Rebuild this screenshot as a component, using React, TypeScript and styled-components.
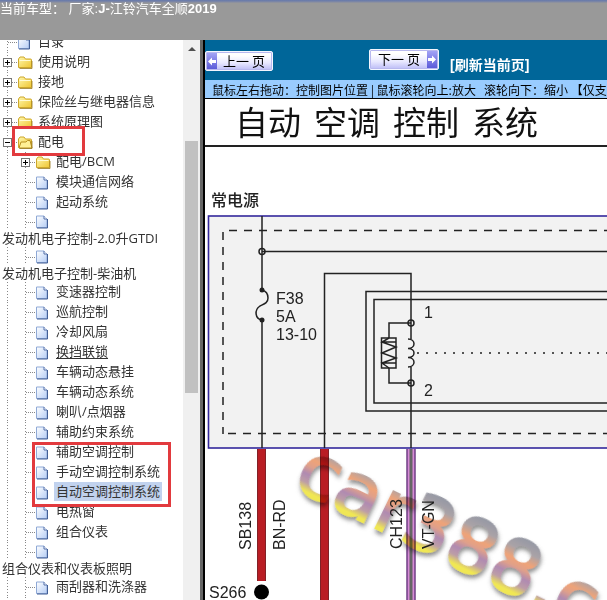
import React from "react";
import styled, { createGlobalStyle, css } from "styled-components";

const GlobalStyle = createGlobalStyle`
  *, *::before, *::after { box-sizing: border-box; }
  body { margin: 0; background: #fff; }
`;

const cjk = `"Noto Sans CJK SC", sans-serif`;

const Page = styled.div`
  display: flex;
  flex-direction: column;
  height: 100vh;
  overflow: hidden;
  font-family: "Liberation Sans", ${cjk};
`;

const Header = styled.header`
  flex: none;
  height: 40px;
  background: linear-gradient(#6478ac 0, #8189a4 2px, #999 3px);
  color: #fff;
  font-size: 13px;
  line-height: 18px;
  white-space: pre;
`;

const Vehicle = styled.strong`
  font-weight: 700;
`;

const Chinese = styled.span`
  font-weight: 400;
`;

const Body = styled.div`
  flex: 1;
  min-height: 0;
  display: grid;
  grid-template-columns: 183px 17px minmax(0, 1fr);
`;

const Tree = styled.nav`
  display: flex;
  flex-direction: column;
  overflow: hidden;
  font-family: "Open Sans", ${cjk};
  font-size: 13px;
  color: #333;
`;

const TreeList = styled.div`
  display: flex;
  flex-direction: column;
  flex: 1 0 auto;
  margin-top: -8px;
`;

const Row = styled.div`
  position: relative;
  flex: none;
  display: flex;
  height: 20px;
`;

const Filler = styled.div`
  display: flex;
  flex: 1;
`;

const Guide = styled.span<{ $branch?: boolean }>`
  flex: none;
  display: flex;
  align-items: center;
  width: 18px;
  padding-left: 3px;
  background-image: repeating-linear-gradient(to bottom, #888 0 1px, transparent 1px 3px)
    ${(p) => p.$branch && css`, repeating-linear-gradient(to right, #888 0 1px, transparent 1px 2px)`};
  background-position: 7px 0, 8px 10px;
  background-size: 1px 100%, 9px 1px;
  background-repeat: no-repeat;
`;

const Toggle = styled.button`
  width: 9px;
  height: 9px;
  margin-top: 1px;
  padding: 0;
  border: 0;
  background: #fff;
  line-height: 0;
`;

const IconCell = styled.span`
  flex: none;
  display: flex;
  align-items: center;
  width: 16px;
  margin-right: 2px;
  padding-top: 1px;
`;

const Label = styled.a<{ $selected?: boolean; $underline?: boolean }>`
  height: 19px;
  padding: 0 2px;
  line-height: 18px;
  white-space: nowrap;
  color: inherit;
  text-decoration: ${(p) => (p.$underline ? "underline" : "none")};
  text-underline-offset: 2px;
  background: ${(p) => (p.$selected ? "#c1d2ee" : "transparent")};
`;

const WrappedItem = styled.div`
  flex: none;
  display: flex;
  flex-direction: column;
`;

const WrappedHead = styled.div`
  display: flex;
  height: 18px;
`;

const WrappedLabel = styled(Label)`
  height: 17px;
  line-height: 17px;
`;

const mark = css`
  content: "";
  position: absolute;
  z-index: 1;
  border: 3px solid #e23a3e;
  pointer-events: none;
`;

const MarkedRow = styled(Row)`
  &::after {
    ${mark}
    left: 12px;
    top: -6px;
    width: 73px;
    height: 30px;
  }
`;

const MarkedGroup = styled.div`
  position: relative;
  flex: none;
  &::after {
    ${mark}
    left: 32px;
    top: 0;
    width: 139px;
    height: 65px;
  }
`;

const ScrollTrack = styled.div`
  display: flex;
  flex-direction: column;
  align-items: center;
  padding-top: 6px;
  background: #f0f0f0;
`;

const Thumb = styled.div`
  width: 13px;
  height: 252px;
  margin-top: 89px;
  background: #c1c1c1;
`;

const Divider = styled.div`
  min-width: 0;
  display: grid;
  border-left: 3px solid #666;
`;

const Main = styled.main`
  display: flex;
  flex-direction: column;
  overflow: hidden;
  border-left: 2px solid #000;
`;

const Toolbar = styled.div`
  flex: none;
  display: flex;
  height: 40px;
  padding-top: 9px;
  background: #069;
`;

const PageButton = styled.button<{ $next?: boolean }>`
  display: flex;
  flex-direction: ${(p) => (p.$next ? "row-reverse" : "row")};
  align-items: stretch;
  width: ${(p) => (p.$next ? 70 : 68)}px;
  height: ${(p) => (p.$next ? 21 : 20)}px;
  margin-top: ${(p) => (p.$next ? 0 : 2)}px;
  margin-left: ${(p) => (p.$next ? 96 : 0)}px;
  padding: 1px;
  border: 1px solid #f4f6ff;
  border-radius: 2px;
  background: linear-gradient(#fff 20%, #e9e9ff 60%, #bcbcf6);
  box-shadow: inset 0 0 0 1px #b8b8ef;
  color: #000;
  font-family: ${cjk};
  font-size: 13px;
  line-height: 15px;
`;

const ArrowBox = styled.span`
  display: flex;
  align-items: center;
  justify-content: center;
  width: 10px;
  background: linear-gradient(#a3a3f5, #5b5bd9);
`;

const ButtonText = styled.span`
  flex: 1;
  white-space: pre;
  text-align: center;
`;

const Refresh = styled.a`
  margin: 7px 0 0 11px;
  color: #fff;
  font-size: 14px;
  font-weight: 700;
  line-height: 18px;
  white-space: nowrap;
  text-decoration: none;
`;

const Hint = styled.div`
  flex: none;
  height: 19px;
  padding-left: 7px;
  overflow: hidden;
  border-bottom: 1px solid #000;
  background: #9cf;
  color: #000;
  font-family: ${cjk};
  font-size: 12px;
  line-height: 19px;
  white-space: pre;
`;

const Title = styled.h1`
  flex: none;
  display: flex;
  gap: 13px;
  height: 48px;
  margin: 0;
  padding-left: 30px;
  border-bottom: 2px solid #222;
  color: #111;
  font-family: ${cjk};
  font-size: 33px;
  font-weight: 400;
  line-height: 44px;
  white-space: nowrap;
`;

const Drawing = styled.svg`
  flex: 1;
  width: 100%;
  min-height: 0;
  font-family: "Liberation Sans Narrow", "Liberation Sans", ${cjk};
  font-size: 16px;
  fill: #222;
`;

const Watermark = styled.g`
  mix-blend-mode: multiply;
`;

const Folder = ({ open }: { open?: boolean }) => (
  <svg width="16" height="15" viewBox="0 0 16 15">
    <defs>
      <linearGradient id="folderFill" x1="0" y1="0" x2="1" y2="1">
        <stop offset="0" stopColor="#fff8ae" />
        <stop offset="1" stopColor="#efc631" />
      </linearGradient>
    </defs>
    <path d="M.5 12.500V4L2 2h4L7.500 4h5q1 0 1 1v7.500Z" fill="url(#folderFill)" stroke="#cda72c" />
    {open ? (
      <path d="M1 13 3 7h5l1.500-1.500H12L14 13Z" fill="#fff095" stroke="#b99020" />
    ) : (
      <path d="M1.500 5.500h11" stroke="#fffbd5" />
    )}
    <path d="M1.500 13.500h12.500V6" fill="none" stroke="#97771a" strokeWidth=".8" />
  </svg>
);

const Sheet = () => (
  <svg width="13" height="14" viewBox="0 0 13 14">
    <defs>
      <linearGradient id="sheetFill" x1="0" y1="0" x2="1" y2="1">
        <stop offset="0" stopColor="#fff" />
        <stop offset="1" stopColor="#b5cdf5" />
      </linearGradient>
    </defs>
    <path d="M.5 1h7.500l3 3v8.500H.5Z" fill="url(#sheetFill)" stroke="#8fa9d6" />
    <path d="M8 1v3h3" fill="#fff" stroke="#526fa8" />
    <path d="M11.500 4v9H1" fill="none" stroke="#425f96" />
  </svg>
);

const Expander = ({ open, name }: { open?: boolean; name: string }) => (
  <Toggle aria-label={name} aria-expanded={!!open}>
    <svg width="9" height="9">
      <rect x=".5" y=".5" width="8" height="8" fill="#fff" stroke="#777" />
      <path d={open ? "M2 4.500h5" : "M2 4.500h5M4.500 2v5"} stroke="#000" />
    </svg>
  </Toggle>
);

type ItemProps = { text: string; underline?: boolean; selected?: boolean };

const FolderRow = ({ text }: ItemProps) => (
  <Row>
    <Guide $branch><Expander name={text} /></Guide>
    <IconCell><Folder /></IconCell>
    <Label href="#">{text}</Label>
  </Row>
);

const Leaf = ({ text, underline, selected }: ItemProps) => (
  <Row>
    <Guide />
    <Guide $branch />
    <IconCell><Sheet /></IconCell>
    <Label href="#" $underline={underline} $selected={selected}>{text}</Label>
  </Row>
);

const WrappedLeaf = ({ text }: ItemProps) => (
  <WrappedItem>
    <WrappedHead>
      <Guide />
      <Guide $branch />
      <IconCell><Sheet /></IconCell>
    </WrappedHead>
    <WrappedLabel href="#">{text}</WrappedLabel>
  </WrappedItem>
);

const Arrow = ({ left }: { left?: boolean }) => (
  <svg width="8" height="9" viewBox="0 0 8 9">
    <path d={left ? "M0 4.500 4 .5V3h4v3H4v2.500Z" : "M8 4.500 4 .5V3H0v3h4v2.500Z"} fill="#fff" />
  </svg>
);

const Schematic = () => (
  <Drawing role="img" aria-label="自动空调控制系统电路图">
    <defs>
      <linearGradient id="markFill" gradientUnits="userSpaceOnUse" x1="0" y1="-56" x2="0" y2="2">
        <stop offset="0" stopColor="#8d909c" />
        <stop offset=".2" stopColor="#a39ba0" />
        <stop offset=".38" stopColor="#ee9b6c" />
        <stop offset=".5" stopColor="#dd9880" />
        <stop offset=".64" stopColor="#a980aa" />
        <stop offset=".78" stopColor="#b795a0" />
        <stop offset=".92" stopColor="#efe545" />
      </linearGradient>
      <filter id="markShadow" x="-10%" y="-20%" width="120%" height="150%">
        <feDropShadow dx="2" dy="3" stdDeviation="2" floodColor="#555" floodOpacity=".7" />
      </filter>
    </defs>
    <g transform="translate(-205 -147)">
      <text x="211" y="206" fontSize="16" fontWeight="500">常电源</text>
      <rect x="208.500" y="216" width="2000" height="232" fill="#f2f2f2" stroke="#33279c" strokeWidth="1.600" />
      <g fill="none" stroke="#222" strokeWidth="1.500">
        <path d="M229 230.500H2200M228 433.500H2200" strokeDasharray="8 7" />
        <path d="M223 232V434" strokeDasharray="8 7" />
        <path d="M262 216V290M262 320V448M262 251.500H2200" />
        <path d="M262 290C266 291 268 294 268 298C268 303 264 304 260 306C254 310 255 319 262 320" />
        <path d="M324.500 448V273.500H411V339M411 367V448" />
        <path d="M2200 291.500H366V411H2200M2200 299.500H374V403H2200" />
        <path d="M411 323H389V338M389 368V383H411" />
        <rect x="381.500" y="338" width="14.500" height="30" />
        <path d="M389 338 382 342 396 347 382 353 396 358 382 363 389 368M382 342 396 342M382 363 396 363" />
        <path d="M408 339C416 339 416 348.500 408 348.500C416 348.500 416 357.500 408 357.500C416 357.500 416 367 408 367" />
        <path d="M417 353H2200" strokeDasharray="2 7" />
        <circle cx="262" cy="251.500" r="3" />
        <circle cx="411" cy="323" r="3" />
        <circle cx="411" cy="383" r="3" />
      </g>
      <circle cx="262" cy="290" r="2.500" />
      <circle cx="262" cy="320" r="2.500" />
      <text x="276" y="304">F38</text>
      <text x="276" y="322">5A</text>
      <text x="276" y="340">13-10</text>
      <text x="424" y="318">1</text>
      <text x="424" y="396">2</text>

      <rect x="257" y="449" width="9" height="132" fill="#b91d24" />
      <rect x="320" y="449" width="9" height="900" fill="#b91d24" />
      <path d="M257.500 449V581M265.500 449V581M320.500 449V1300M328.500 449V1300" stroke="#812126" />
      <path d="M411 449V1300" stroke="#d68ad6" strokeWidth="8" />
      <path d="M411 449V1300" stroke="#666" strokeWidth="3" />
      <path d="M407 449V1300M415 449V1300" stroke="#703f85" strokeWidth="1.500" />
      <circle cx="261.500" cy="592" r="7.500" fill="#000" />
      <text x="209" y="598">S266</text>

      <Watermark transform="translate(291 487) rotate(26)" opacity=".92" filter="url(#markShadow)">
        <text fontFamily="DejaVu Sans" fontSize="75" fill="url(#markFill)" stroke="url(#markFill)" strokeWidth="2">
          car388.c
        </text>
      </Watermark>
      <text transform="translate(251 550) rotate(-90)">SB138</text>
      <text transform="translate(285 550) rotate(-90)">BN-RD</text>
      <text transform="translate(402 549) rotate(-90)">CH123</text>
      <text transform="translate(434 549) rotate(-90)">VT-GN</text>
    </g>
  </Drawing>
);

export default function App() {
  return (
    <Page>
      <GlobalStyle />
      <Header>
        <Vehicle>
          <Chinese>当前车型： 厂家:</Chinese>J-<Chinese>江铃汽车全顺</Chinese>2019
        </Vehicle>
      </Header>
      <Body>
        <Tree aria-label="目录">
          <TreeList>
            <Row>
              <Guide $branch />
              <IconCell><Sheet /></IconCell>
              <Label href="#">目录</Label>
            </Row>
            {["使用说明", "接地", "保险丝与继电器信息", "系统原理图"].map((t) => (
              <FolderRow key={t} text={t} />
            ))}
            <MarkedRow>
              <Guide $branch><Expander open name="配电" /></Guide>
              <IconCell><Folder open /></IconCell>
              <Label href="#">配电</Label>
            </MarkedRow>
            <Row>
              <Guide />
              <Guide $branch><Expander name="配电/BCM" /></Guide>
              <IconCell><Folder /></IconCell>
              <Label href="#">配电/BCM</Label>
            </Row>
            <Leaf text="模块通信网络" />
            <Leaf text="起动系统" />
            <WrappedLeaf text="发动机电子控制-2.0升GTDI" />
            <WrappedLeaf text="发动机电子控制-柴油机" />
            <Leaf text="变速器控制" />
            <Leaf text="巡航控制" />
            <Leaf text="冷却风扇" />
            <Leaf text="换挡联锁" underline />
            <Leaf text="车辆动态悬挂" />
            <Leaf text="车辆动态系统" />
            <Leaf text="喇叭/点烟器" />
            <Leaf text="辅助约束系统" />
            <MarkedGroup>
              <Leaf text="辅助空调控制" />
              <Leaf text="手动空调控制系统" />
              <Leaf text="自动空调控制系统" selected />
            </MarkedGroup>
            <Leaf text="电热窗" />
            <Leaf text="组合仪表" />
            <WrappedLeaf text="组合仪表和仪表板照明" />
            <Leaf text="雨刮器和洗涤器" />
            <Filler>
              <Guide />
              <Guide />
            </Filler>
          </TreeList>
        </Tree>
        <ScrollTrack>
          <svg width="8" height="6"><path d="M0 5 4 1l4 4Z" fill="#505050" /></svg>
          <Thumb />
        </ScrollTrack>
        <Divider>
          <Main>
            <Toolbar>
              <PageButton>
                <ArrowBox><Arrow left /></ArrowBox>
                <ButtonText>上一 页</ButtonText>
              </PageButton>
              <PageButton $next>
                <ArrowBox><Arrow /></ArrowBox>
                <ButtonText>下一 页</ButtonText>
              </PageButton>
              <Refresh href="#">[刷新当前页]</Refresh>
            </Toolbar>
            <Hint>鼠标左右拖动：控制图片位置 | 鼠标滚轮向上:放大   滚轮向下：缩小 【仅支持IE】</Hint>
            <Title>
              <span>自动</span>
              <span>空调</span>
              <span>控制</span>
              <span>系统</span>
            </Title>
            <Schematic />
          </Main>
        </Divider>
      </Body>
    </Page>
  );
}
